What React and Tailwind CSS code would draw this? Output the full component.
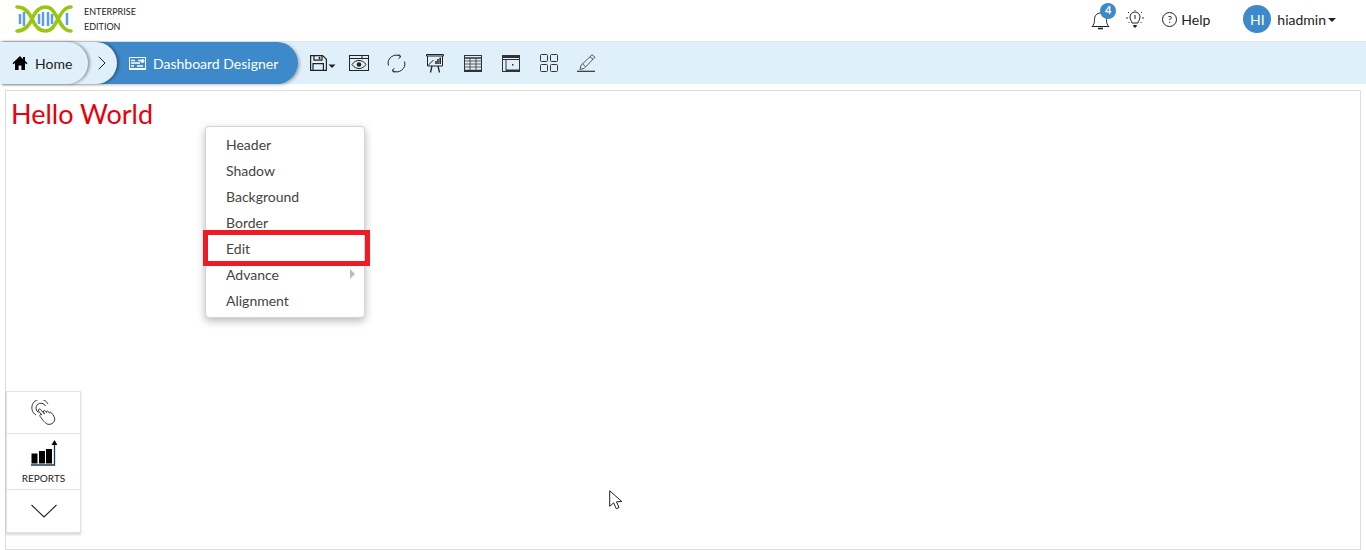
import {ChevronRight} from "lucide-react";

const font = {fontFamily: '"Lato", "Liberation Sans", sans-serif'};

function Logo() {
  return (
    <svg width="58" height="28" viewBox="0 0 58 28" fill="none">
      <g stroke="#5b9df0" strokeWidth="2.5">
        <path d="M5 9v10M9 7v14M24 9v10M28 7v14M33 7v14M37 9v10M52 8v12" />
      </g>
      <g stroke="#97c70f" strokeWidth="3.6" strokeLinecap="round">
        <path d="M2 2c8 0 12 5 15 12s7 12 13 12c7 0 9-5 13-12s7-12 13-12" />
        <path d="M2 26c8 0 12-5 15-12s7-12 13-12c7 0 9 5 13 12s7 12 13 12" />
      </g>
    </svg>
  );
}

function HomeIcon() {
  return (
    <svg width="16" height="16" viewBox="0 0 16 16" fill="#000">
      <path d="M8 1 0.5 8.2l1 1L3 7.9V15h3.6v-4.5h2.8V15H13V7.9l1.5 1.3 1-1-2.5-2.4V2h-2v2.3z" />
    </svg>
  );
}

function DesignerIcon() {
  return (
    <svg width="17" height="13" viewBox="0 0 17 13" fill="none" stroke="#fff">
      <rect x="0.5" y="0.5" width="16" height="11" strokeWidth="1" />
      <path d="M2 3.5h4M9 3.5h3M2 6h9M2 9h3M8 9h6" strokeWidth="1.4" />
      <circle cx="13.5" cy="4" r="1.5" fill="#fff" />
      <path d="M0 12.5h17" strokeWidth="1" />
    </svg>
  );
}

function SaveIcon() {
  return (
    <svg width="26" height="16" viewBox="0 0 26 16" fill="none" stroke="#222" strokeWidth="1.2">
      <path d="M.6.6h12l3.8 3.6v11.2H.6z" />
      <path d="M4 .6v4.6h8V.6M3 15.4V8.6h10.4v6.8" />
      <path d="M9.5 1.8v2.4" strokeWidth="1.6" />
      <path d="M18.5 9.5h7l-3.5 3.5z" fill="#222" stroke="none" />
    </svg>
  );
}

function PreviewIcon() {
  return (
    <svg width="20" height="16" viewBox="0 0 20 16" fill="none" stroke="#222">
      <rect x="0.5" y="0.5" width="19" height="15" />
      <path d="M.5 3.5h19M13 .5v3" />
      <path d="M3 9.5c2-3 4.500-4 7-4s5 1 7 4c-2 3-4.500 4-7 4s-5-1-7-4z" />
      <circle cx="10" cy="9.500" r="2.300" fill="#222" stroke="none" />
    </svg>
  );
}

function RefreshIcon() {
  return (
    <svg width="19" height="19" viewBox="0 0 19 19" fill="none" stroke="#222">
      <path d="M1.500 11.500A8 8 0 0 1 13.500 2.500" />
      <path d="M17.500 7.500A8 8 0 0 1 5.500 16.500" />
      <path d="M11.500.5l2.500 2-2.500 2.200M7.500 14.300l-2.500 2.200 2.500 2" />
    </svg>
  );
}

function PresentIcon() {
  return (
    <svg width="18" height="19" viewBox="0 0 18 19" fill="none" stroke="#222">
      <path d="M.5.5h17v1.500H.5zM1.500 2v10h15V2" />
      <path d="M2.500 11l5-5" />
      <path d="M10 10V7M12 10V5M14.200 10V3.500" strokeWidth="1.500" />
      <path d="M6 12l-1.500 6.500M12 12l1.500 6.500" strokeWidth="1.300" />
    </svg>
  );
}

function TableIcon() {
  return (
    <svg width="18" height="17" viewBox="0 0 18 17" fill="none" stroke="#333">
      <rect x="0.500" y="0.500" width="17" height="16" />
      <path d="M.5 3h17" strokeWidth="1.500" />
      <path d="M.5 6h17M.5 9h17M.5 12h17M6 3v13M12 3v13" strokeWidth="0.800" />
      <path d="M.5 15.500h17" strokeWidth="1.500" />
    </svg>
  );
}

function WindowIcon() {
  return (
    <svg width="18" height="17" viewBox="0 0 18 17" fill="none" stroke="#333">
      <rect x="0.500" y="0.500" width="17" height="16" />
      <path d="M.5 2h17" strokeWidth="2" />
      <path d="M.5 4.500h17M4 4.500v12" />
      <path d="M4 15.500h13.500" strokeWidth="2" />
      <rect x="10" y="9" width="1.500" height="1.500" fill="#333" stroke="none" />
    </svg>
  );
}

function GridIcon() {
  return (
    <svg width="18" height="18" viewBox="0 0 18 18" fill="none" stroke="#333">
      <rect x="0.500" y="0.500" width="7" height="7" rx="1" />
      <rect x="10.500" y="0.500" width="7" height="7" rx="1" />
      <rect x="0.500" y="10.500" width="7" height="7" rx="1" />
      <rect x="10.500" y="10.500" width="7" height="7" rx="1" />
    </svg>
  );
}

function PenIcon() {
  return (
    <svg width="20" height="18" viewBox="0 0 20 18" fill="none" stroke="#444" strokeWidth="0.900">
      <path d="M15 .8l3 2.400L7 14.500l-4 1 1-4.200z" />
      <path d="M13 2.800l3 2.500M5.500 9.800l3 2.800" />
      <path d="M0 17.300h18" stroke="#222" strokeWidth="1.100" />
    </svg>
  );
}

function BellIcon() {
  return (
    <svg width="19" height="20" viewBox="0 0 19 20" fill="none" stroke="#222">
      <path d="M1 16.500c2-1.500 2.500-4 2.500-7 0-4 2.500-6.500 6-6.500s6 2.500 6 6.500c0 3 .5 5.500 2.500 7z" />
      <path d="M7 18.500h5" strokeWidth="1.600" />
    </svg>
  );
}

function BulbIcon() {
  return (
    <svg width="18" height="18" viewBox="0 0 18 18" fill="none" stroke="#222">
      <path d="M6 13c0-2-2-3-2-6a5 5 0 0 1 10 0c0 3-2 4-2 6z" />
      <path d="M9 5v4" />
      <path d="M7 15h4l-1 2.500H8z" fill="#222" stroke="none" />
      <path d="M9 0v1M2 2l1 1M16 2l-1 1M0 8h2M16 8h2M2.500 13l1-1M15.500 13l-1-1" strokeWidth="0.900" />
    </svg>
  );
}

function TapIcon() {
  return (
    <svg width="28" height="26" viewBox="0 0 28 26" fill="none" stroke="#333">
      <path d="M6 15A8.500 8.500 0 1 1 18 4" />
      <path d="M8.500 12.500A5 5 0 1 1 15.500 6" />
      <path d="M11.500 14.500l-3-3.500c-1-1.500 1-2.800 2-1.500l4 4.500-1-2c-.4-1.500 1.200-2 2-1l1 1.500c-.4-1.200 1.200-1.800 2-.8l1 1.500c0-1 1.300-1.300 2-.4 2 2.500 4 5.500 3 8-1 2.500-4 4-6.500 3.500-2.500-.5-5-4-8-8-.8-1.200.6-2.500 1.800-1.500z" />
    </svg>
  );
}

function ReportsIcon() {
  return (
    <svg width="26" height="26" viewBox="0 0 26 26" fill="none">
      <rect x="0.500" y="13.500" width="6" height="10" fill="#000" />
      <rect x="8" y="11" width="6" height="12.500" fill="#000" />
      <rect x="15" y="9" width="6" height="14.500" fill="#000" />
      <path d="M0 25h23.500V5" stroke="#1c3a57" strokeWidth="1.300" />
      <path d="M23.500 0l3 5h-6z" fill="#000" />
    </svg>
  );
}

function CursorIcon() {
  return (
    <svg width="14" height="20" viewBox="0 0 14 20" fill="#fff" stroke="#222" className="absolute left-[609px] top-[490px]">
      <path d="M.7.8v15.500l4-3.500 2.600 6 2.700-1.200-2.500-5.800 5.300-.3z" />
    </svg>
  );
}

const menuItems = ["Header", "Shadow", "Background", "Border", "Edit", "Advance", "Alignment"];

function ContextMenu() {
  return (
    <div className="absolute left-[205px] top-[126px] w-[160px] rounded bg-white border border-[#d4d4d4] py-[4px] shadow-[0_3px_8px_rgba(0,0,0,0.28)]">
      {menuItems.map((item) => (
        <div key={item} className="relative flex h-[26px] items-center justify-between pl-[20px] pr-[9px] text-[14px] text-[#444]">
          {item}
          {item === "Advance" && <span className="h-0 w-0 border-y-[5px] border-l-[5px] border-y-transparent border-l-[#bbb]" />}
          {item === "Edit" && <span className="absolute -left-[3px] -right-[6px] top-[-1px] h-[36px] -translate-y-[4px] border-[5px] border-[#ed1c24]" />}
        </div>
      ))}
    </div>
  );
}

function SideWidget() {
  return (
    <div className="absolute left-[6px] top-[391px] w-[75px] flex flex-col bg-white border border-[#e2e2e2] shadow-[0_2px_2px_rgba(0,0,0,0.15)]">
      <div className="h-[42px] flex items-center justify-center border-b border-[#e2e2e2]">
        <TapIcon />
      </div>
      <div className="h-[56px] flex flex-col items-center pt-[6px] border-b border-[#e2e2e2]">
        <ReportsIcon />
        <span className="mt-[7px] text-[10px] leading-none text-[#222]">REPORTS</span>
      </div>
      <div className="h-[42px] flex items-center justify-center">
        <svg width="26" height="14" viewBox="0 0 26 14" fill="none" stroke="#222" strokeWidth="1.100">
          <path d="M.5 1 13 13 25.500 1" />
        </svg>
      </div>
    </div>
  );
}

export default function App() {
  return (
    <div style={font} className="relative h-[550px] w-[1366px] overflow-hidden bg-white text-[#222]">
      <header className="flex h-[42px] items-center justify-between border-b border-[#dfe6ea]">
        <div className="flex items-center pl-[15px] pb-[3px]">
          <Logo />
          <div className="ml-[11px] text-[9px] leading-[15px] text-[#222]">
            ENTERPRISE
            <br />
            EDITION
          </div>
        </div>
        <div className="flex items-center pr-[30px] pb-[3px] text-[14px]">
          <div className="relative mt-[1px]">
            <BellIcon />
            <span className="absolute -top-[7px] left-[9px] flex h-[16px] w-[16px] items-center justify-center rounded-full bg-[#3d89c9] text-[11px] font-bold text-white">4</span>
          </div>
          <div className="ml-[16px]"><BulbIcon /></div>
          <div className="ml-[18px] flex items-center gap-[4px]">
            <span className="flex h-[15px] w-[15px] items-center justify-center rounded-full border border-[#222] text-[10px]">?</span>
            Help
          </div>
          <span className="ml-[33px] flex h-[28px] w-[28px] items-center justify-center rounded-full bg-[#3d89c9] text-[14px] text-white">HI</span>
          <span className="ml-[6px]">hiadmin</span>
          <span className="ml-[2px] mt-[2px] h-0 w-0 border-x-[4px] border-t-[4px] border-x-transparent border-t-[#222]" />
        </div>
      </header>

      <nav className="flex h-[42px] items-center bg-[#e0f0fa]">
        <div className="flex h-full w-[298px] items-center rounded-r-[21px] bg-[#3d89c9] text-[14px] text-white shadow-[2px_1px_3px_rgba(0,0,0,0.25)]">
          <div className="flex h-full w-[117px] shrink-0 items-center rounded-r-[21px] bg-[#e0f0fa] shadow-[2px_0_3px_rgba(0,0,0,0.35)]">
            <div className="flex h-full w-[88px] shrink-0 items-center gap-[7px] rounded-r-[21px] pl-[12px] text-[#222] shadow-[2px_0_3px_rgba(0,0,0,0.35)]">
              <HomeIcon />
              Home
            </div>
            <ChevronRight size={24} strokeWidth={1} className="ml-[2px] text-[#222]" />
          </div>
          <div className="ml-[12px] flex items-center gap-[7px]">
            <DesignerIcon />
            <span>Dashboard Designer</span>
          </div>
        </div>
        <div className="ml-[12px] flex items-center">
          <SaveIcon />
          <div className="ml-[13px]"><PreviewIcon /></div>
          <div className="ml-[18px]"><RefreshIcon /></div>
          <div className="ml-[20px]"><PresentIcon /></div>
          <div className="ml-[20px]"><TableIcon /></div>
          <div className="ml-[20px]"><WindowIcon /></div>
          <div className="ml-[20px]"><GridIcon /></div>
          <div className="ml-[19px]"><PenIcon /></div>
        </div>
      </nav>

      <main className="ml-[5px] mr-[5px] mt-[6px] h-[460px] border border-[#dcdcdc] pl-[5px] pt-[6px]">
        <h1 className="text-[27px] leading-[34px] text-[#e8000b]">Hello World</h1>
      </main>

      <ContextMenu />
      <SideWidget />
      <CursorIcon />
    </div>
  );
}
